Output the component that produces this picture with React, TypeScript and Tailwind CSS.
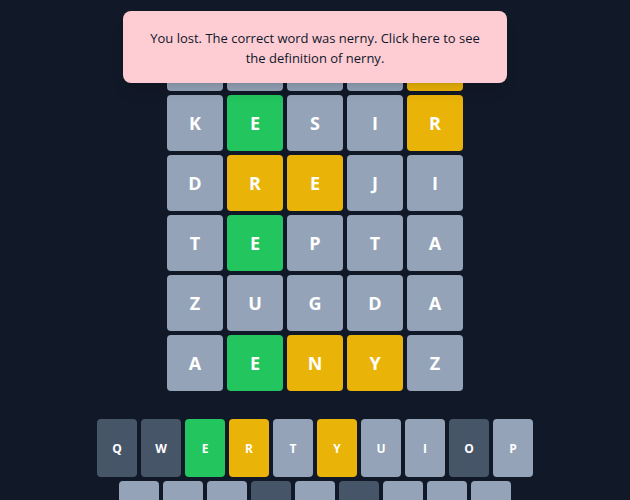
import React from "react";

type Status = "absent" | "present" | "correct" | "unused";

const statusClass: Record<Status, string> = {
  absent: "bg-[#94a3b8]",
  present: "bg-[#eab308]",
  correct: "bg-[#22c55e]",
  unused: "bg-[#475569]",
};

const statusOf: Record<string, Status> = {
  a: "absent",
  p: "present",
  c: "correct",
  u: "unused",
};

const guesses: [string, string][] = [
  ["     ", "aaaap"],
  ["KESIR", "acaap"],
  ["DREJI", "appaa"],
  ["TEPTA", "acaaa"],
  ["ZUGDA", "aaaaa"],
  ["AENYZ", "acppa"],
];

const keyRows: [string, string][] = [
  ["QWERTYUIOP", "uucpapaaua"],
  ["ASDFGHJKL", "aaauauaaa"],
];

function Tile({ letter, status }: { letter: string; status: Status }) {
  return (
    <div
      className={`flex size-14 items-center justify-center rounded text-lg font-bold text-white ${statusClass[status]}`}
    >
      {letter.trim()}
    </div>
  );
}

function Key({ letter, status }: { letter: string; status: Status }) {
  return (
    <button
      type="button"
      className={`flex h-[58px] w-10 items-center justify-center rounded pt-0.5 text-xs font-bold text-white ${statusClass[status]}`}
    >
      {letter}
    </button>
  );
}

function Toast() {
  return (
    <div className="absolute inset-x-0 top-[11px] z-10 flex justify-center" role="alert">
      <button
        type="button"
        className="w-96 rounded-lg bg-[#fecdd3] px-6 pt-[17px] pb-[15px] text-center text-[13px] leading-5 text-[#0f172a] shadow-lg"
      >
        You lost. The correct word was nerny. Click here to see the definition of nerny.
      </button>
    </div>
  );
}

export default function App() {
  return (
    <div className="relative h-screen overflow-hidden bg-[#111827] font-['Open_Sans','Noto_Sans',sans-serif]">
      <Toast />
      <main className="flex flex-col items-center gap-7 pt-[35px]">
        <div className="flex flex-col gap-1">
          {guesses.map(([word, marks], row) => (
            <div key={row} className="flex gap-1">
              {word.split("").map((letter, i) => (
                <Tile key={i} letter={letter} status={statusOf[marks[i]]} />
              ))}
            </div>
          ))}
        </div>
        <div className="flex flex-col gap-1">
          {keyRows.map(([letters, marks]) => (
            <div key={letters} className="flex justify-center gap-1">
              {letters.split("").map((letter, i) => (
                <Key key={letter} letter={letter} status={statusOf[marks[i]]} />
              ))}
            </div>
          ))}
        </div>
      </main>
    </div>
  );
}
